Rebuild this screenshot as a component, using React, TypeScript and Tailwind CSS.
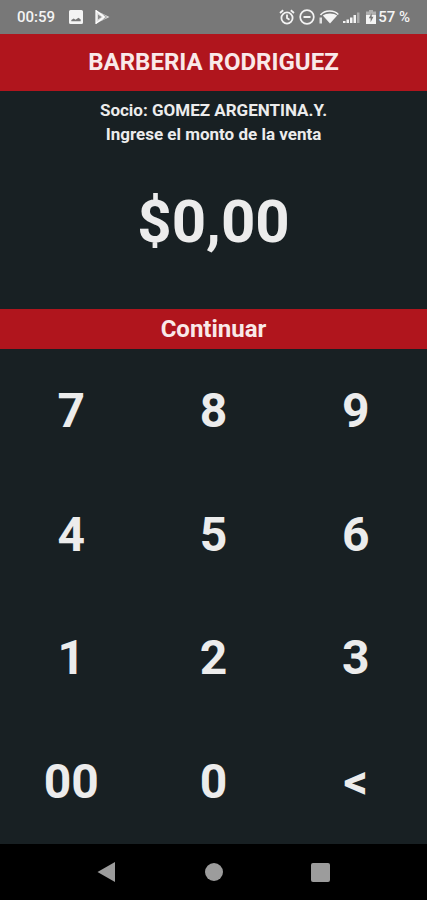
import React from "react";

const keys = ["7", "8", "9", "4", "5", "6", "1", "2", "3", "00", "0", "<"];

function StatusBar() {
    return (
        <div className="flex h-[34px] items-center justify-between bg-[#787878] px-[17px] text-[15px] font-medium text-[#f4f4f4]">
            <div className="flex items-center">
                <span className="mr-[14px]">00:59</span>
                <svg className="mr-3 h-[14px] w-[14px]" viewBox="0 0 14 14" fill="currentColor" aria-hidden="true">
                    <path fillRule="evenodd" d="M1.5 0h11A1.5 1.5 0 0 1 14 1.5v11a1.5 1.5 0 0 1-1.5 1.5h-11A1.5 1.5 0 0 1 0 12.5v-11A1.5 1.5 0 0 1 1.5 0ZM2.3 11.3h9.4V9.5L9.5 7.8 6.5 9.8 4.7 8.6 2.3 10Z" />
                </svg>
                <svg className="h-[14px] w-[15px]" viewBox="0 0 15 14" aria-hidden="true">
                    <path d="M1 .5 14.5 7 1 13.5Z" fill="#dedede" />
                    <path d="M1 .5 9 7 1 13.5Z" fill="none" stroke="#fff" strokeWidth="1.2" />
                    <path d="M3 4.5v5L6.5 7Z" fill="#8c8c8c" />
                    <path d="M8.5 4.5 11.5 7l-3 2.5" fill="none" stroke="#999" />
                </svg>
            </div>
            <div className="flex items-center">
                <svg className="mr-1 h-4 w-4" viewBox="0 0 16 16" fill="none" stroke="currentColor" strokeWidth="1.8" aria-hidden="true">
                    <circle cx="8" cy="9" r="5.6" />
                    <path d="M8 5.500V9l2.500 1.700M1 4 4.200 1.300M15 4l-3.200-2.700" />
                </svg>
                <svg className="mr-1 h-4 w-4" viewBox="0 0 16 16" fill="none" stroke="currentColor" strokeWidth="1.7" aria-hidden="true">
                    <circle cx="8" cy="8" r="6.8" />
                    <path d="M4.500 8h7" strokeWidth="2" />
                </svg>
                <svg className="mr-1 h-4 w-5" viewBox="0 0 20 16" fill="currentColor" aria-hidden="true">
                    <path d="M3.800 6.500C7 3.800 15 3.800 18.200 6.500L11 14.500Z" />
                    <path d="M1.500 6C6 .8 15 .8 19.300 5.500" fill="none" stroke="currentColor" strokeWidth="1.5" />
                    <path d="M.5 8.500h2.500v6H.5Z" opacity="0.85" />
                </svg>
                <svg className="mr-[6px] h-4 w-[17px]" viewBox="0 0 17 16" fill="currentColor" aria-hidden="true">
                    <path d="M0 12h2.500v2H0ZM3.500 10.500H6V14H3.500ZM7 8.500h2.500V14H7ZM10.500 6H13v8h-2.500Z" />
                    <path d="M14 3.500h2.500V14H14Z" opacity="0.4" />
                </svg>
                <svg className="mr-[2px] h-4 w-[10px]" viewBox="0 0 10 16" fill="currentColor" aria-hidden="true">
                    <path d="M3 1h4v1.500h3V6H0V2.500h3Z" opacity="0.45" />
                    <path d="M0 6h10v9H0Z" />
                    <path d="M5.700 4 2.800 9.300h1.800v4l2.900-5.500H5.700Z" fill="#787878" />
                </svg>
                <span>57 %</span>
            </div>
        </div>
    );
}

function NavBar() {
    return (
        <nav className="flex h-14 justify-center bg-black text-[#9c9c9c]">
            <button type="button" aria-label="Atrás" className="grid w-1/4 place-items-center">
                <svg className="h-5 w-5" viewBox="0 0 20 20" fill="currentColor">
                    <path d="M18 0v20L.5 10Z" />
                </svg>
            </button>
            <button type="button" aria-label="Inicio" className="grid w-1/4 place-items-center">
                <span className="h-[18px] w-[18px] rounded-full bg-current" />
            </button>
            <button type="button" aria-label="Recientes" className="grid w-1/4 place-items-center">
                <span className="h-[19px] w-[19px] rounded-xs bg-current" />
            </button>
        </nav>
    );
}

export default function App() {
    return (
        <div className="flex min-h-screen flex-col bg-[#182023] font-['Roboto',sans-serif] text-[#ececec]">
            <StatusBar />
            <header className="bg-[#b0151d] py-3">
                <h1 className="text-center text-2xl leading-[33px] font-bold text-[#f9e9e9]">BARBERIA RODRIGUEZ</h1>
            </header>
            <main className="flex flex-1 flex-col">
                <section className="pt-[7px] pb-[47px] text-center font-bold">
                    <p className="text-[17px] leading-6">Socio: GOMEZ ARGENTINA.Y.</p>
                    <p className="text-[17px] leading-6">Ingrese el monto de la venta</p>
                    <output className="mt-9 block text-[60px] leading-[80px]">$0,00</output>
                </section>
                <button type="button" className="h-10 bg-[#b0151d] text-2xl font-bold text-[#f9e9e9]">
                    Continuar
                </button>
                <div className="grid flex-1 grid-cols-3 grid-rows-4">
                    {keys.map((key) => (
                        <button key={key} type="button" className="text-5xl font-bold">
                            {key}
                        </button>
                    ))}
                </div>
            </main>
            <NavBar />
        </div>
    );
}
